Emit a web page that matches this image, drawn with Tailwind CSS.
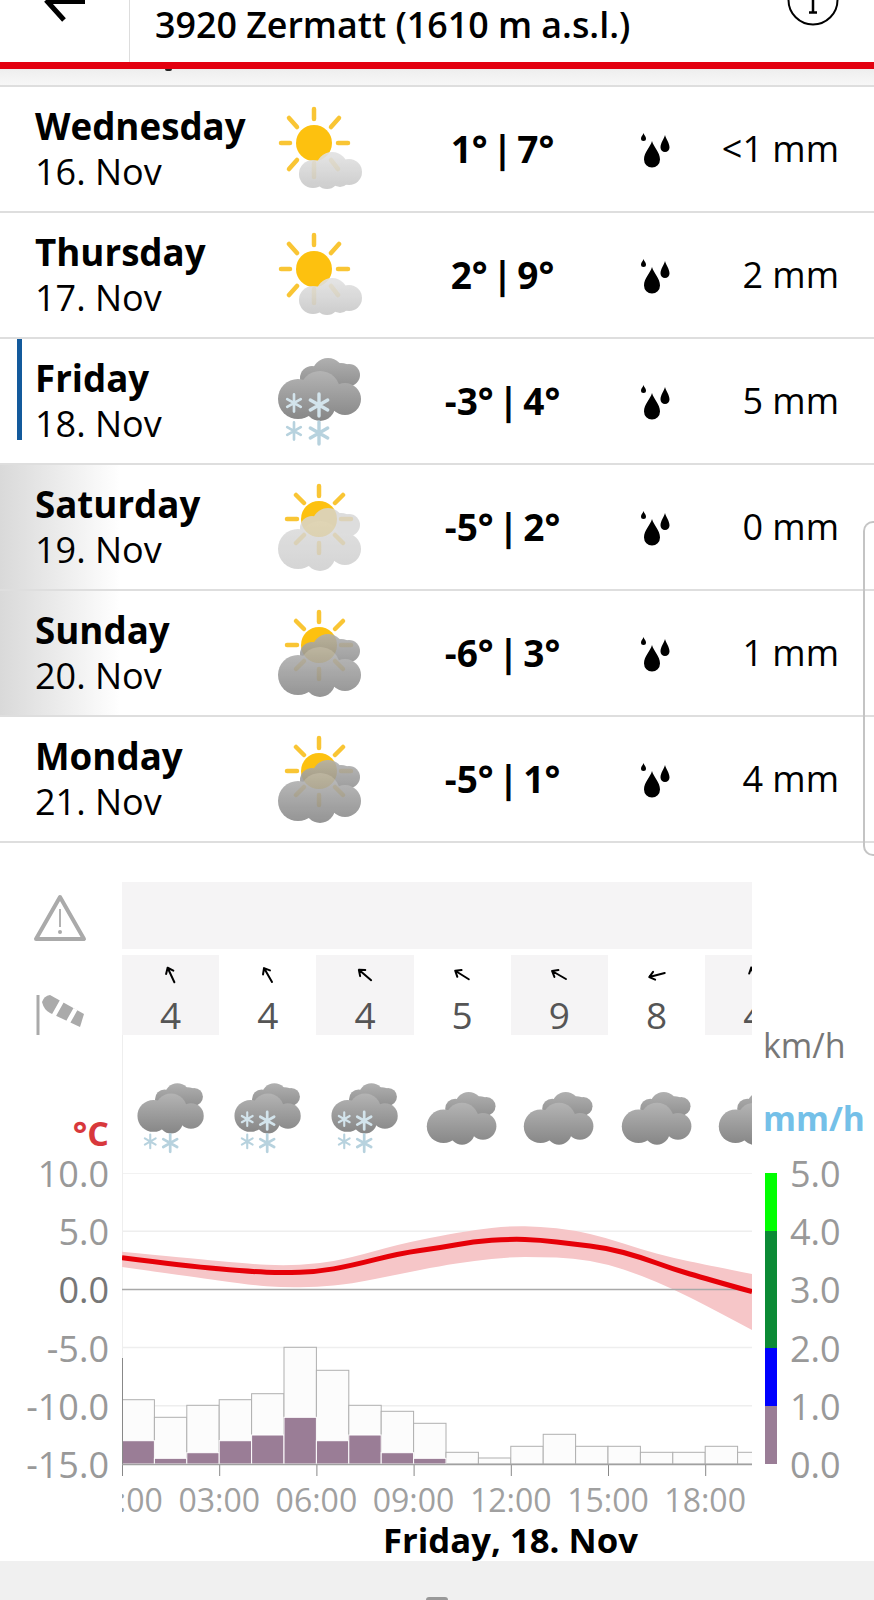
<!DOCTYPE html>
<html lang="en">
<head>
<meta charset="utf-8">
<title>Zermatt forecast</title>
<script src="https://cdn.jsdelivr.net/npm/@tailwindcss/browser@4"></script>
</head>
<body class="bg-white text-black font-['Open_Sans',sans-serif] overflow-hidden">
<svg class="absolute w-0 h-0" aria-hidden="true">
  <defs>
    <linearGradient id="gd" gradientUnits="userSpaceOnUse" x1="0" y1="32" x2="0" y2="82"><stop offset="0" stop-color="#b4b4b4"/><stop offset="1" stop-color="#868686"/></linearGradient>
    <linearGradient id="gdb" gradientUnits="userSpaceOnUse" x1="0" y1="19" x2="0" y2="50"><stop offset="0" stop-color="#b0b0b0"/><stop offset="1" stop-color="#8e8e8e"/></linearGradient>
    <linearGradient id="gl" gradientUnits="userSpaceOnUse" x1="0" y1="32" x2="0" y2="82"><stop offset="0" stop-color="#dadada"/><stop offset="1" stop-color="#cccccc"/></linearGradient>
    <linearGradient id="gw" gradientUnits="userSpaceOnUse" x1="0" y1="66" x2="0" y2="102"><stop offset="0" stop-color="#e2e2e2"/><stop offset="1" stop-color="#c8c8c8"/></linearGradient>
    <g id="cf"><circle cx="23" cy="60" r="20"/><circle cx="45" cy="52" r="20"/><circle cx="70" cy="60" r="16"/><circle cx="45" cy="67" r="15"/></g>
    <g id="cb"><circle cx="53" cy="35" r="16"/><circle cx="66" cy="38" r="14"/><circle cx="74" cy="36" r="11"/><circle cx="37" cy="39" r="12"/></g>
    <g id="flake"><path d="M0 -11V11M-8.7 -5L8.7 5M-8.7 5L8.7 -5" fill="none" stroke-width="3.4" stroke-linecap="round"/></g>
    <g id="flakes-on"><use href="#flake" transform="translate(19,64) scale(.78)" stroke="#d3e4ec"/><use href="#flake" transform="translate(44,66)" stroke="#d3e4ec"/></g>
    <g id="flakes-under"><use href="#flake" transform="translate(19,92) scale(.78)" stroke="#b7d2de"/><use href="#flake" transform="translate(44,94)" stroke="#b7d2de"/></g>
    <g id="cloud"><use href="#cb" fill="url(#gdb)"/><use href="#cf" fill="url(#gd)"/></g>
    <g id="rays" fill="none" stroke="#f9c534" stroke-width="4.500" stroke-linecap="round"><path d="M44 21V31M12 54H22M66 54H76M21 30L29 38M68 30L60 38M29 70L21 78M60 70L68 78M44 78V88"/></g>
    <g id="suncloud-sun"><use href="#rays"/><circle cx="44" cy="54" r="18" fill="#fdc10f"/></g>
    <symbol id="sunny" viewBox="0 0 90 124">
      <g fill="none" stroke="#f9c534" stroke-width="4.500" stroke-linecap="round"><path d="M39 22V32M6 56H15M63 56H73M14 31L22 40M64 31L56 40M22 73L14 82M39 76V90M56 73L63 82"/></g>
      <circle cx="39" cy="56" r="18" fill="#fdc10f"/>
      <g fill="url(#gw)" opacity=".9"><circle cx="38" cy="87" r="14"/><circle cx="57" cy="81" r="16"/><circle cx="74" cy="85" r="13"/><circle cx="52" cy="90" r="12"/><circle cx="65" cy="90" r="10"/></g>
    </symbol>
    <symbol id="snow" viewBox="0 0 90 124"><use href="#cloud"/><use href="#flakes-on"/><use href="#flakes-under"/></symbol>
    <symbol id="snow-under" viewBox="0 0 90 124"><use href="#cloud"/><use href="#flakes-under"/></symbol>
    <symbol id="grey" viewBox="0 0 90 124"><use href="#cloud"/></symbol>
    <symbol id="sun-pale" viewBox="0 0 90 124"><use href="#suncloud-sun"/><g transform="translate(0,24)" opacity=".82"><use href="#cb" fill="#d6d6d6"/><use href="#cf" fill="url(#gl)"/></g></symbol>
    <symbol id="sun-dark" viewBox="0 0 90 124"><use href="#suncloud-sun"/><g transform="translate(0,24)" opacity=".88"><use href="#cloud"/></g></symbol>
    <symbol id="drops" viewBox="0 0 32 36"><path d="M12 9C10.500 15 4 20 4 27.500a8 8 0 0 0 16 0C20 20 13.500 15 12 9Z"/><path d="M25 3C24 7 20.500 11 20.500 15.500a4.500 4.500 0 0 0 9 0C29.500 11 26 7 25 3Z"/><path d="M3.500 1C3 3 1 4.500 1 6.500a2.500 2.500 0 0 0 5 0C6 4.500 4 3 3.500 1Z"/></symbol>
    <g id="arrow" fill="none" stroke="#000" stroke-width="2" stroke-linecap="round" stroke-linejoin="round"><path d="M0 8V-8M-4 -3L0 -8L4 -3"/></g>
  </defs>
</svg>

<header class="flex h-[62px] relative overflow-hidden">
  <svg class="w-[129px] h-[62px] shrink-0" viewBox="0 0 129 62"><path d="M46 0L64 20M46 1.500H85" fill="none" stroke="#000" stroke-width="5"/></svg>
  <div class="border-l border-[#ddd] flex-1 flex items-start pl-[25px]">
    <h1 class="text-[35.8px] leading-[48px] font-semibold">3920 Zermatt (1610 m a.s.l.)</h1>
  </div>
  <svg class="absolute left-[786px] top-0 w-[54px] h-[28px]" viewBox="0 0 54 28"><circle cx="27" cy="0" r="24.500" fill="none" stroke="#000" stroke-width="2"/><path d="M27 0V12M23 12.500H31" fill="none" stroke="#000" stroke-width="2.500"/></svg>
</header>
<div class="h-[7px] bg-[#e3000f]"></div>
<div class="h-[18px] bg-gradient-to-b from-[#eeeeee] to-[#f7f7f7] border-b-2 border-[#dedede] relative">
  <div class="absolute left-[165px] top-0 w-[7px] h-[2px] rounded-b-full bg-[#222]"></div>
</div>

<main class="relative">
  <section class="h-[126px] flex items-center border-b-2 border-[#dedede] pl-[35px]">
    <div class="w-[240px] shrink-0"><div class="text-[36.7px] leading-[46px] font-bold">Wednesday</div><div class="text-[36px] leading-[46px]">16. Nov</div></div>
    <svg class="w-[90px] h-[124px] shrink-0"><use href="#sunny"/></svg>
    <div class="w-[275px] text-center text-[37px] font-bold [word-spacing:-5px]">1° | 7°</div>
    <svg class="w-[32px] h-[36px] shrink-0 mt-[2px]"><use href="#drops"/></svg>
    <div class="flex-1 text-right pr-[35px] text-[36px]">&lt;1 mm</div>
  </section>
  <section class="h-[126px] flex items-center border-b-2 border-[#dedede] pl-[35px]">
    <div class="w-[240px] shrink-0"><div class="text-[36.7px] leading-[46px] font-bold">Thursday</div><div class="text-[36px] leading-[46px]">17. Nov</div></div>
    <svg class="w-[90px] h-[124px] shrink-0"><use href="#sunny"/></svg>
    <div class="w-[275px] text-center text-[37px] font-bold [word-spacing:-5px]">2° | 9°</div>
    <svg class="w-[32px] h-[36px] shrink-0 mt-[2px]"><use href="#drops"/></svg>
    <div class="flex-1 text-right pr-[35px] text-[36px]">2 mm</div>
  </section>
  <section class="h-[126px] flex items-center border-b-2 border-[#dedede] pl-[35px] relative">
    <div class="absolute left-[17px] top-0 w-[5px] h-[101px] bg-[#135a9c]"></div>
    <div class="w-[240px] shrink-0"><div class="text-[36.7px] leading-[46px] font-bold">Friday</div><div class="text-[36px] leading-[46px]">18. Nov</div></div>
    <svg class="w-[90px] h-[124px] shrink-0"><use href="#snow"/></svg>
    <div class="w-[275px] text-center text-[37px] font-bold [word-spacing:-5px]">-3° | 4°</div>
    <svg class="w-[32px] h-[36px] shrink-0 mt-[2px]"><use href="#drops"/></svg>
    <div class="flex-1 text-right pr-[35px] text-[36px]">5 mm</div>
  </section>
  <section class="h-[126px] flex items-center border-b-2 border-[#dedede] pl-[35px] bg-[linear-gradient(to_right,#d9d9d9,#ffffff_120px)]">
    <div class="w-[240px] shrink-0"><div class="text-[36.7px] leading-[46px] font-bold">Saturday</div><div class="text-[36px] leading-[46px]">19. Nov</div></div>
    <svg class="w-[90px] h-[124px] shrink-0"><use href="#sun-pale"/></svg>
    <div class="w-[275px] text-center text-[37px] font-bold [word-spacing:-5px]">-5° | 2°</div>
    <svg class="w-[32px] h-[36px] shrink-0 mt-[2px]"><use href="#drops"/></svg>
    <div class="flex-1 text-right pr-[35px] text-[36px]">0 mm</div>
  </section>
  <section class="h-[126px] flex items-center border-b-2 border-[#dedede] pl-[35px] bg-[linear-gradient(to_right,#d9d9d9,#ffffff_120px)]">
    <div class="w-[240px] shrink-0"><div class="text-[36.7px] leading-[46px] font-bold">Sunday</div><div class="text-[36px] leading-[46px]">20. Nov</div></div>
    <svg class="w-[90px] h-[124px] shrink-0"><use href="#sun-dark"/></svg>
    <div class="w-[275px] text-center text-[37px] font-bold [word-spacing:-5px]">-6° | 3°</div>
    <svg class="w-[32px] h-[36px] shrink-0 mt-[2px]"><use href="#drops"/></svg>
    <div class="flex-1 text-right pr-[35px] text-[36px]">1 mm</div>
  </section>
  <section class="h-[126px] flex items-center border-b-2 border-[#dedede] pl-[35px]">
    <div class="w-[240px] shrink-0"><div class="text-[36.7px] leading-[46px] font-bold">Monday</div><div class="text-[36px] leading-[46px]">21. Nov</div></div>
    <svg class="w-[90px] h-[124px] shrink-0"><use href="#sun-dark"/></svg>
    <div class="w-[275px] text-center text-[37px] font-bold [word-spacing:-5px]">-5° | 1°</div>
    <svg class="w-[32px] h-[36px] shrink-0 mt-[2px]"><use href="#drops"/></svg>
    <div class="flex-1 text-right pr-[35px] text-[36px]">4 mm</div>
  </section>
  <div class="absolute left-[863px] top-[434px] w-[11px] h-[335px] border-2 border-r-0 border-[#c4c4c4] rounded-l-[10px]"></div>
</main>

<div class="h-[39px]"></div>
<div class="grid grid-cols-[122px_630px_122px] grid-rows-[67px_6px_80px_138px_303px]">
  <!-- warnings -->
  <div class="flex items-center justify-center pr-[2px] pt-[5px]">
    <svg class="w-[54px] h-[48px]" viewBox="0 0 54 48"><path d="M27 3L51 45H3Z" fill="none" stroke="#aaa" stroke-width="4" stroke-linejoin="round"/><path d="M27 15V33" stroke="#aaa" stroke-width="1.800"/><circle cx="27" cy="38" r="2" fill="#aaa"/></svg>
  </div>
  <div class="bg-[#f5f4f5]"></div>
  <div></div>
  <div class="col-span-3"></div>
  <!-- wind -->
  <div class="flex items-start pl-[36px] pt-[40px]">
    <svg class="w-[50px] h-[42px]" viewBox="0 0 50 42"><path d="M2 0V40" stroke="#aaa" stroke-width="3"/><path d="M6 7Q8 1 14 0L48 19L44 32L14 18Q8 15 6 7Z" fill="#aaa"/><path d="M26.500 5L17.500 21M39.500 14L30.500 30" stroke="#fff" stroke-width="4.500"/></svg>
  </div>
  <div class="flex overflow-hidden">
    <div class="w-[97.2px] shrink-0 h-full bg-[#f5f4f5] flex flex-col items-center"><svg class="w-[20px] h-[20px] mt-[10px]" viewBox="-10 -10 20 20"><use href="#arrow" transform="rotate(-25)"/></svg><div class="mt-[11px] text-[37px] leading-[38px] text-[#555]">4</div></div>
    <div class="w-[97.2px] shrink-0 h-full flex flex-col items-center"><svg class="w-[20px] h-[20px] mt-[10px]" viewBox="-10 -10 20 20"><use href="#arrow" transform="rotate(-30)"/></svg><div class="mt-[11px] text-[37px] leading-[38px] text-[#555]">4</div></div>
    <div class="w-[97.2px] shrink-0 h-full bg-[#f5f4f5] flex flex-col items-center"><svg class="w-[20px] h-[20px] mt-[10px]" viewBox="-10 -10 20 20"><use href="#arrow" transform="rotate(-50)"/></svg><div class="mt-[11px] text-[37px] leading-[38px] text-[#555]">4</div></div>
    <div class="w-[97.2px] shrink-0 h-full flex flex-col items-center"><svg class="w-[20px] h-[20px] mt-[10px]" viewBox="-10 -10 20 20"><use href="#arrow" transform="rotate(-58)"/></svg><div class="mt-[11px] text-[37px] leading-[38px] text-[#555]">5</div></div>
    <div class="w-[97.2px] shrink-0 h-full bg-[#f5f4f5] flex flex-col items-center"><svg class="w-[20px] h-[20px] mt-[10px]" viewBox="-10 -10 20 20"><use href="#arrow" transform="rotate(-60)"/></svg><div class="mt-[11px] text-[37px] leading-[38px] text-[#555]">9</div></div>
    <div class="w-[97.2px] shrink-0 h-full flex flex-col items-center"><svg class="w-[20px] h-[20px] mt-[10px]" viewBox="-10 -10 20 20"><use href="#arrow" transform="rotate(-105)"/></svg><div class="mt-[11px] text-[37px] leading-[38px] text-[#555]">8</div></div>
    <div class="w-[97.2px] shrink-0 h-full bg-[#f5f4f5] flex flex-col items-center"><svg class="w-[20px] h-[20px] mt-[10px]" viewBox="-10 -10 20 20"><use href="#arrow" transform="rotate(-20)"/></svg><div class="mt-[11px] text-[37px] leading-[38px] text-[#555]">4</div></div>
  </div>
  <div></div>
  <!-- sky -->
  <div class="flex justify-end items-end pr-[13px] pb-[24px]"><div class="text-[34px] leading-[32px] font-bold text-[#d8383c]">°C</div></div>
  <div class="flex overflow-hidden shadow-[inset_1px_0_0_#eeeeee]">
    <div class="w-[97.2px] shrink-0 flex justify-center"><svg class="w-[72px] h-[99px] mt-[33px]"><use href="#snow-under"/></svg></div>
    <div class="w-[97.2px] shrink-0 flex justify-center"><svg class="w-[72px] h-[99px] mt-[33px]"><use href="#snow"/></svg></div>
    <div class="w-[97.2px] shrink-0 flex justify-center"><svg class="w-[72px] h-[99px] mt-[33px]"><use href="#snow"/></svg></div>
    <div class="w-[97.2px] shrink-0 flex justify-center"><svg class="w-[76px] h-[104px] mt-[41px]"><use href="#grey"/></svg></div>
    <div class="w-[97.2px] shrink-0 flex justify-center"><svg class="w-[76px] h-[104px] mt-[41px]"><use href="#grey"/></svg></div>
    <div class="w-[97.2px] shrink-0 flex justify-center"><svg class="w-[76px] h-[104px] mt-[41px]"><use href="#grey"/></svg></div>
    <div class="w-[97.2px] shrink-0 flex justify-center"><svg class="w-[76px] h-[104px] mt-[41px]"><use href="#grey"/></svg></div>
  </div>
  <div class="flex flex-col pl-[11px]">
    <div class="mt-[-10px] text-[34px] leading-[40px] text-[#777]">km/h</div>
    <div class="mt-[33px] text-[33.6px] leading-[40px] font-bold text-[#74c0e8]">mm/h</div>
  </div>
  <!-- plot -->
  <div class="flex flex-col items-end pr-[13px] -mt-[28px] text-[36px] text-[#999]">
    <div class="h-[58.2px] shrink-0 flex items-center leading-[36px]">10.0</div>
    <div class="h-[58.2px] shrink-0 flex items-center leading-[36px]">5.0</div>
    <div class="h-[58.2px] shrink-0 flex items-center leading-[36px] text-[#777]">0.0</div>
    <div class="h-[58.2px] shrink-0 flex items-center leading-[36px]">-5.0</div>
    <div class="h-[58.2px] shrink-0 flex items-center leading-[36px]">-10.0</div>
    <div class="h-[58.2px] shrink-0 flex items-center leading-[36px]">-15.0</div>
  </div>
  <svg class="w-[630px] h-[303px]" viewBox="0 0 630 303">
    <path d="M0 0H630M0 58.200H630M0 174.600H630M0 232.800H630" stroke="#eeeeee" stroke-width="1.500"/>
    <path d="M0.500 0V291" stroke="#eeeeee" stroke-width="1"/>
    <path fill="#f6c6c8" d="M0 78.700Q65 85 96.500 88Q128 91 144.500 91.750Q161 92.500 178 91.750Q195 91 211.500 88Q228 85 253 78Q278 71 298 67Q318 63 334.500 60Q351 57 369.500 55Q388 53 403 53.250Q418 53.500 434.500 55.250Q451 57 468 61Q485 65 501.500 70.500Q518 76 534.500 80.500Q551 85 568 88.500Q585 92 630 101L630 157Q585 133 568 124.500Q551 116 534.500 109Q518 102 501.500 96.500Q485 91 468 88Q451 85 434.500 84.500Q418 84 403 84Q388 84 369.500 86Q351 88 334.500 90.500Q318 93 298 97Q278 101 253 106Q228 111 211.500 112.500Q195 114 178 114.250Q161 114.500 144.500 113.250Q128 112 96.500 107.500Q65 103 0 94Z"/>
    <path d="M0 116.400H630" stroke="#a8a8a8" stroke-width="1.500"/>
    <path fill="none" stroke="#e60008" stroke-width="5" d="M0 84.700Q65 93 96.500 95.850Q128 98.700 144.500 99.200Q161 99.700 178 99.200Q195 98.700 211.500 95.850Q228 93 253 86.650Q278 80.300 298 77.500Q318 74.700 334.500 71.700Q351 68.700 369.500 67.350Q388 66 403 66.500Q418 67 434.500 69Q451 71 468 73Q485 75 501.500 79.500Q518 84 534.500 90Q551 96 568 101Q585 106 630 118.700"/>
    <g fill="#fcfcfc" stroke="#b0b0b0" stroke-width="1">
      <rect x="0" y="226.700" width="32.400" height="64.300"/><rect x="32.400" y="244.300" width="32.400" height="46.700"/><rect x="64.800" y="232.300" width="32.400" height="58.700"/><rect x="97.200" y="226.700" width="32.400" height="64.300"/><rect x="129.600" y="220.700" width="32.400" height="70.300"/><rect x="162" y="174.300" width="32.400" height="116.700"/><rect x="194.400" y="197.300" width="32.400" height="93.700"/><rect x="226.800" y="232.300" width="32.400" height="58.700"/><rect x="259.200" y="238.300" width="32.400" height="52.700"/><rect x="291.600" y="250.300" width="32.400" height="40.700"/><rect x="324" y="279.300" width="32.400" height="11.700"/><rect x="356.400" y="285" width="32.400" height="6"/><rect x="388.800" y="273.300" width="32.400" height="17.700"/><rect x="421.200" y="261.300" width="32.400" height="29.700"/><rect x="453.600" y="273.300" width="32.400" height="17.700"/><rect x="486" y="273.300" width="32.400" height="17.700"/><rect x="518.400" y="279.300" width="32.400" height="11.700"/><rect x="550.800" y="279.300" width="32.400" height="11.700"/><rect x="583.200" y="273.300" width="32.400" height="17.700"/><rect x="615.600" y="279.300" width="32.400" height="11.700"/>
    </g>
    <g fill="#9a7d96" stroke="#ffffff" stroke-width="1">
      <rect x="0" y="267.700" width="32.400" height="23.300"/><rect x="32.400" y="285.300" width="32.400" height="5.700"/><rect x="64.800" y="279.700" width="32.400" height="11.300"/><rect x="97.200" y="267.700" width="32.400" height="23.300"/><rect x="129.600" y="262" width="32.400" height="29"/><rect x="162" y="244.300" width="32.400" height="46.700"/><rect x="194.400" y="267.700" width="32.400" height="23.300"/><rect x="226.800" y="262" width="32.400" height="29"/><rect x="259.200" y="279.700" width="32.400" height="11.300"/><rect x="291.600" y="285.300" width="32.400" height="5.700"/>
    </g>
    <path d="M0.500 185V303M97.700 291V303M194.900 291V303M292.100 291V303M389.300 291V303M486.500 291V303M583.700 291V303" stroke="#888" stroke-width="1"/>
    <path d="M0 291.500H630" stroke="#a0a0a0" stroke-width="1.500"/>
  </svg>
  <div class="flex pl-[13px]">
    <div class="w-[12px] h-[291px] flex flex-col shrink-0">
      <div class="h-[58.200px] bg-[#00ff00]"></div>
      <div class="h-[116.400px] bg-[#0b8a35]"></div>
      <div class="h-[58.200px] bg-[#0000ff]"></div>
      <div class="flex-1 bg-[#9a7d96]"></div>
    </div>
    <div class="flex flex-col pl-[13px] -mt-[28px] text-[36px] text-[#999]">
      <div class="h-[58.2px] shrink-0 flex items-center leading-[36px]">5.0</div>
      <div class="h-[58.2px] shrink-0 flex items-center leading-[36px]">4.0</div>
      <div class="h-[58.2px] shrink-0 flex items-center leading-[36px]">3.0</div>
      <div class="h-[58.2px] shrink-0 flex items-center leading-[36px]">2.0</div>
      <div class="h-[58.2px] shrink-0 flex items-center leading-[36px]">1.0</div>
      <div class="h-[58.2px] shrink-0 flex items-center leading-[36px]">0.0</div>
    </div>
  </div>
</div>
<div class="ml-[122px] w-[630px] h-[44px] overflow-hidden">
  <div class="flex -ml-[48.6px] text-[32px] leading-[48px] text-[#a0a0a0]">
    <div class="w-[97.2px] shrink-0 text-center">00:00</div>
    <div class="w-[97.2px] shrink-0 text-center">03:00</div>
    <div class="w-[97.2px] shrink-0 text-center">06:00</div>
    <div class="w-[97.2px] shrink-0 text-center">09:00</div>
    <div class="w-[97.2px] shrink-0 text-center">12:00</div>
    <div class="w-[97.2px] shrink-0 text-center">15:00</div>
    <div class="w-[97.2px] shrink-0 text-center">18:00</div>
  </div>
</div>
<div class="h-[41px] pl-[383px] text-[34.7px] leading-[40px] font-bold">Friday, 18. Nov</div>
<footer class="h-[39px] bg-[#f0f0f0] flex justify-center items-end">
  <div class="w-[22px] h-[3px] rounded-t-full bg-[#999]"></div>
</footer>
</body>
</html>
